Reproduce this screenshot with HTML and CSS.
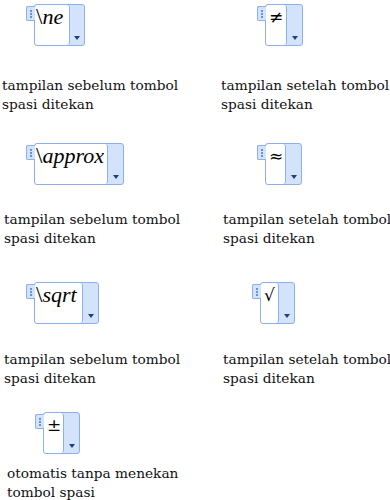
FILE: index.html
```html
<!DOCTYPE html>
<html>
<head>
<meta charset="utf-8">
<link rel="stylesheet" href="styles.css">
</head>
<body>
<div class="row r1">
  <div class="cell">
    <div class="widget w1">
      <div class="handle"><i></i><i></i><i></i></div>
      <div class="box"><div class="field"><span class="bs">\</span><span class="it">ne</span></div><div class="drop"><b></b></div></div>
    </div>
    <p class="caption c-l1">tampilan sebelum tombol<br>spasi ditekan</p>
  </div>
  <div class="cell">
    <div class="widget w2">
      <div class="handle"><i></i><i></i><i></i></div>
      <div class="box"><div class="field sym">≠</div><div class="drop"><b></b></div></div>
    </div>
    <p class="caption c-r1">tampilan setelah tombol<br>spasi ditekan</p>
  </div>
</div>

<div class="row r2">
  <div class="cell">
    <div class="widget w3">
      <div class="handle"><i></i><i></i><i></i></div>
      <div class="box"><div class="field"><span class="bs">\</span><span class="it">approx</span></div><div class="drop"><b></b></div></div>
    </div>
    <p class="caption c-l2">tampilan sebelum tombol<br>spasi ditekan</p>
  </div>
  <div class="cell">
    <div class="widget w4">
      <div class="handle"><i></i><i></i><i></i></div>
      <div class="box"><div class="field sym">≈</div><div class="drop"><b></b></div></div>
    </div>
    <p class="caption c-r2">tampilan setelah tombol<br>spasi ditekan</p>
  </div>
</div>

<div class="row r3">
  <div class="cell">
    <div class="widget w5">
      <div class="handle"><i></i><i></i><i></i></div>
      <div class="box"><div class="field"><span class="bs">\</span><span class="it">sqrt</span></div><div class="drop"><b></b></div></div>
    </div>
    <p class="caption c-l3">tampilan sebelum tombol<br>spasi ditekan</p>
  </div>
  <div class="cell">
    <div class="widget w6">
      <div class="handle"><i></i><i></i><i></i></div>
      <div class="box"><div class="field sym">√</div><div class="drop"><b></b></div></div>
    </div>
    <p class="caption c-r3">tampilan setelah tombol<br>spasi ditekan</p>
  </div>
</div>

<div class="row r4">
  <div class="cell">
    <div class="widget w7">
      <div class="handle"><i></i><i></i><i></i></div>
      <div class="box"><div class="field sym">±</div><div class="drop"><b></b></div></div>
    </div>
    <p class="caption c-l4">otomatis tanpa menekan<br>tombol spasi</p>
  </div>
</div>
</body>
</html>
```

FILE: styles.css
```css
html, body {
  margin: 0;
  padding: 0;
  background: #fff;
}
body {
  font-family: "DejaVu Serif", "Liberation Serif", serif;
  font-size: 13.7px;
  color: #111;
}
.row {
  display: grid;
  grid-template-columns: 221px 1fr;
}
.r1 { padding-top: 4px; }
.r2 { margin-top: 29px; }
.r3 { margin-top: 34px; }
.r4 { margin-top: 24px; }

.cell {
  display: flex;
  flex-direction: column;
  align-items: flex-start;
}

.widget {
  display: flex;
  align-items: flex-start;
  height: 42px;
}
.handle {
  width: 8px;
  height: 13px;
  margin-top: 2px;
  margin-right: -1px;
  background: #d4e3fc;
  border: 1px solid #8db0ea;
  border-right: none;
  border-radius: 2px 0 0 2px;
  display: flex;
  flex-direction: column;
  align-items: center;
  justify-content: center;
  gap: 1px;
  position: relative;
  z-index: 1;
}
.handle i {
  display: block;
  width: 2px;
  height: 2px;
  background: #6b90d6;
}
.box {
  display: flex;
  height: 40px;
  border: 1px solid #8db0ea;
  border-radius: 3px;
  background: #d4e3fc;
}
.field {
  height: 40px;
  box-sizing: border-box;
  background: #fff;
  border-right: 1px solid #8db0ea;
  border-radius: 3px;
  font-family: "Liberation Serif", serif;
  font-size: 22px;
  line-height: 24px;
  padding-left: 1px;
  white-space: nowrap;
  overflow: hidden;
  color: #000;
}
.field .it { font-style: italic; }
.field .bs { font-size: 23px; }
.field.sym {
  font-family: "DejaVu Serif", serif;
  font-size: 17px;
  padding-left: 3px;
}
.drop {
  width: 14px;
  height: 40px;
  display: flex;
  align-items: flex-end;
  justify-content: center;
}
.drop b {
  display: block;
  width: 0;
  height: 0;
  border-left: 3.5px solid transparent;
  border-right: 3.5px solid transparent;
  border-top: 4px solid #1f3f84;
  margin-bottom: 5px;
}

.w1 { margin-left: 26px; }
.w1 .field { width: 35px; }
.w2 { margin-left: 36px; }
.w2 .field { width: 21px; }
.w2 .drop { width: 15px; }
.w3 { margin-left: 26px; }
.w3 .field { width: 73px; }
.w3 .drop { width: 15px; }
.w4 { margin-left: 36px; }
.w4 .field { width: 20px; }
.w4 .drop { width: 15px; }
.w5 { margin-left: 26px; }
.w5 .field { width: 48px; }
.w5 .drop { width: 15px; }
.w6 { margin-left: 31px; }
.w6 .field { width: 18px; }
.w6 .drop { width: 15px; }
.w7 { margin-left: 35px; }
.w7 .field { width: 20px; }
.w7 .drop { width: 15px; }

.caption {
  margin: 0;
  line-height: 19px;
  white-space: nowrap;
}
.c-l1 { margin-top: 30px; margin-left: 2px; }
.c-r1 { margin-top: 30px; margin-left: 0; }
.c-l2 { margin-top: 25px; margin-left: 4px; }
.c-r2 { margin-top: 25px; margin-left: 2px; }
.c-l3 { margin-top: 26px; margin-left: 4px; }
.c-r3 { margin-top: 26px; margin-left: 2px; }
.c-l4 { margin-top: 10px; margin-left: 7px; }
```
